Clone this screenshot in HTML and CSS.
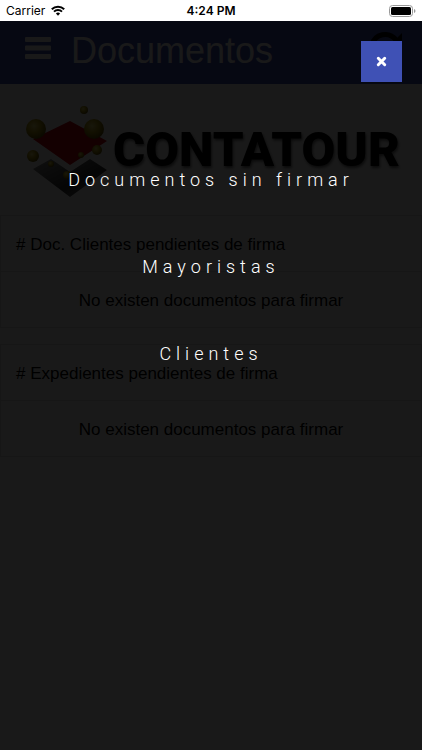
FILE: index.html
```html
<!DOCTYPE html>
<html lang="es">
<head>
  <meta charset="UTF-8" />
  <meta name="viewport" content="width=device-width, initial-scale=1.0"/>
  <title>Documentos</title>
  <link rel="stylesheet" href="styles.css">
</head>
<body>

<div class="status-bar">
  <div class="carrier">
    <span>Carrier</span>
    <svg width="14" height="11" viewBox="0 0 14 11" fill="none" stroke="#000" stroke-width="2">
      <path d="M0.8 4.2a8.8 8.8 0 0 1 12.4 0"/>
      <path d="M3 6.6a5.7 5.7 0 0 1 8 0"/>
      <path d="M7 10.8L4.9 8.6a3 3 0 0 1 4.2 0z" fill="#000" stroke="none"/>
    </svg>
  </div>
  <span class="clock">4:24 PM</span>
  <div class="battery">
    <svg width="27" height="12" viewBox="0 0 27 12">
      <rect x="0.5" y="0.5" width="23" height="11" rx="3" fill="none" stroke="#999"/>
      <rect x="2" y="2" width="20" height="8" rx="1.5" fill="#000"/>
      <path d="M25 4v4q1.5-.5 1.5-2T25 4z" fill="#999"/>
    </svg>
  </div>
</div>

<div class="screen">
  <header class="header">
    <button class="icon-btn" aria-label="Menú">
      <svg width="26" height="22" viewBox="0 0 26 22" fill="#fff">
        <rect width="26" height="5" rx="1"/>
        <rect y="8.5" width="26" height="5" rx="1"/>
        <rect y="17" width="26" height="5" rx="1"/>
      </svg>
    </button>
    <h1>Documentos</h1>
    <button class="icon-btn" aria-label="Actualizar">
      <svg width="34" height="34" viewBox="0 0 34 34" fill="none" stroke="#000" stroke-width="5">
        <path d="M4 14a13.5 13.5 0 0 1 24-5"/>
        <path d="M30 20a13.5 13.5 0 0 1-24 5"/>
        <path d="M34 2v12H22zM0 32V20h12z" fill="#000" stroke="none"/>
      </svg>
    </button>
  </header>

  <main>
    <div class="logo">
      <svg width="84" height="94" viewBox="0 0 84 94">
        <defs>
          <radialGradient id="ball" cx="40%" cy="35%" r="65%">
            <stop offset="0" stop-color="#f0e070"/>
            <stop offset="0.5" stop-color="#b8a010"/>
            <stop offset="1" stop-color="#6a5800"/>
          </radialGradient>
          <linearGradient id="base" x1="0" y1="0" x2="1" y2="1">
            <stop offset="0" stop-color="#999"/>
            <stop offset="0.6" stop-color="#333"/>
            <stop offset="1" stop-color="#888"/>
          </linearGradient>
        </defs>
        <path d="M8 66l18-10 19 13 20-13 17 11-37 27z" fill="url(#base)"/>
        <path d="M8 36l37-18 37 20-37 24z" fill="#c8000c"/>
        <g fill="url(#ball)">
          <circle cx="11" cy="26" r="10"/>
          <circle cx="69" cy="26" r="10"/>
          <circle cx="59" cy="7" r="4"/>
          <circle cx="8" cy="53" r="6"/>
          <circle cx="72" cy="47" r="5"/>
          <circle cx="26" cy="61" r="3"/>
          <circle cx="42" cy="72" r="4"/>
          <circle cx="56" cy="52" r="3"/>
        </g>
      </svg>
      <span class="logo-name">CONTATOUR</span>
    </div>

    <table>
      <thead>
        <tr><th># Doc. Clientes pendientes de firma</th></tr>
      </thead>
      <tbody>
        <tr><td>No existen documentos para firmar</td></tr>
      </tbody>
    </table>

    <table>
      <thead>
        <tr><th># Expedientes pendientes de firma</th></tr>
      </thead>
      <tbody>
        <tr><td>No existen documentos para firmar</td></tr>
      </tbody>
    </table>
  </main>

  <div class="overlay" id="menu">
    <button class="close-btn" id="closeBtn" aria-label="Cerrar">
      <svg width="11" height="11" viewBox="0 0 11 11" stroke="#fff" stroke-width="3" stroke-linecap="round">
        <path d="M2.3 2.3l6.4 6.4M8.7 2.3L2.3 8.7"/>
      </svg>
    </button>
    <nav>
      <a href="#">Documentos sin firmar</a>
      <a href="#">Mayoristas</a>
      <a href="#">Clientes</a>
    </nav>
  </div>
</div>

<script>
  document.getElementById("closeBtn").addEventListener("click", function () {
    document.getElementById("menu").classList.add("hidden");
  });
</script>

</body>
</html>
```
FILE: styles.css
```css
* {
  box-sizing: border-box;
}

body {
  font-family: "Liberation Sans", Arial, sans-serif;
  background: #fff;
  margin: 0;
  min-height: 100vh;
  display: flex;
  flex-direction: column;
}

button {
  border: none;
  padding: 0;
  background: none;
  cursor: pointer;
}

svg {
  display: block;
}

/* status bar */
.status-bar {
  display: grid;
  grid-template-columns: 1fr auto 1fr;
  align-items: center;
  height: 21px;
  padding: 0 6px;
  font-family: Inter, sans-serif;
  font-size: 12px;
  color: #000;
}

.carrier {
  display: flex;
  align-items: center;
  gap: 6px;
}

.clock {
  font-weight: 600;
}

.battery {
  justify-self: end;
}

/* page */
.screen {
  position: relative;
  flex: 1;
}

.header {
  display: flex;
  align-items: center;
  height: 63px;
  padding: 0 20px 4px 25px;
  background: #3f51b5;
}

.header h1 {
  flex: 1;
  margin: 0;
  padding-left: 20px;
  font-size: 36px;
  font-weight: normal;
  color: #fff;
}

.icon-btn {
  padding-bottom: 6px;
}

.logo {
  display: flex;
  align-items: center;
  gap: 4px;
  height: 131px;
  padding: 0 20px 0 25px;
}

.logo-name {
  font-family: Roboto, sans-serif;
  font-size: 49px;
  font-weight: 900;
  color: #000;
  text-shadow: 1px 2px 3px #666;
}

table {
  width: 100%;
  margin-bottom: 16px;
  border: 1px solid #ddd;
  border-collapse: collapse;
  font-size: 17px;
}

th,
td {
  height: 56px;
  padding: 2px 15px 0;
  border-bottom: 1px solid #ddd;
  font-weight: normal;
  color: #000;
}

th {
  text-align: left;
}

td {
  text-align: center;
}

/* full screen menu */
.overlay {
  position: absolute;
  inset: 0;
  padding-top: 115px;
  background: rgba(0, 0, 0, 0.9);
}

.overlay a {
  display: block;
  font-family: Roboto, "Liberation Sans", sans-serif;
  font-size: 18px;
  font-weight: 300;
  line-height: 87px;
  letter-spacing: 5px;
  text-align: center;
  text-decoration: none;
  color: #fff;
}

.close-btn {
  position: absolute;
  top: 20px;
  right: 20px;
  display: flex;
  align-items: center;
  justify-content: center;
  width: 41px;
  height: 41px;
  background: #3f51b5;
}

.hidden {
  display: none;
}
```
